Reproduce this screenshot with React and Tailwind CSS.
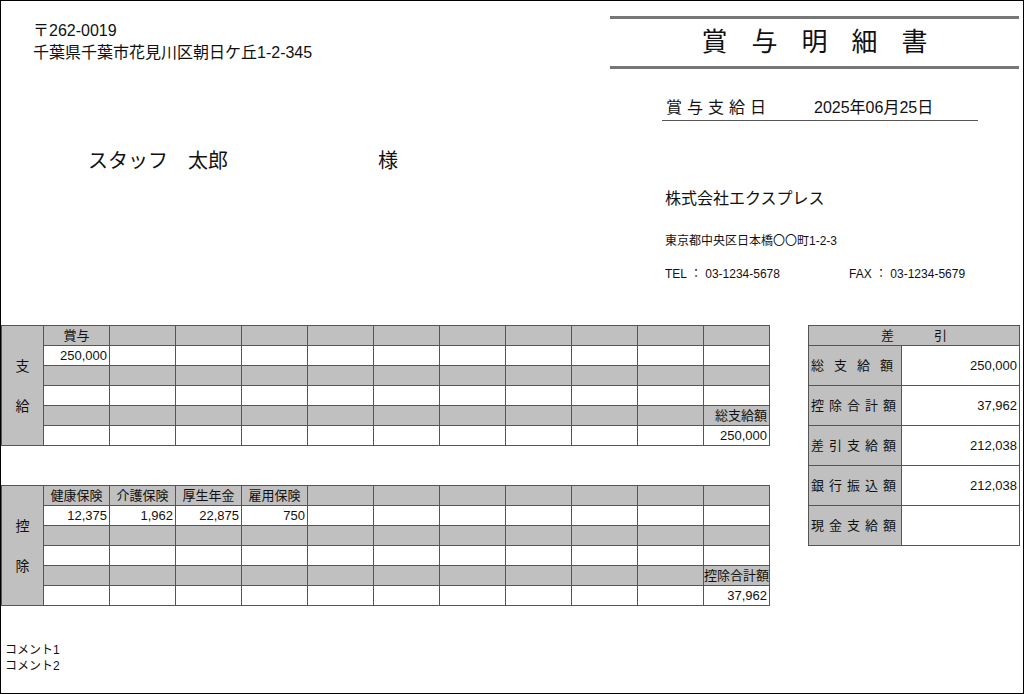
import React from "react";

const F = { fontFamily: '"Liberation Sans", "Noto Sans CJK JP", sans-serif' };

function Cell({ gray, children, className = "" }) {
  return (
    <td className={`border border-[#555] h-[20px] p-0 leading-[18px] text-[13px] whitespace-nowrap overflow-hidden ${gray ? "bg-[#c0c0c0]" : "bg-white"} ${className}`}>
      {children}
    </td>
  );
}

function DetailTable({ label, heads, values, totalLabel, total, smallTotal }) {
  return (
    <table className="border-collapse table-fixed w-[769px]">
      <colgroup>
        <col className="w-[42px]" />
        {Array.from({ length: 11 }).map((_, i) => <col key={i} className="w-[66px]" />)}
      </colgroup>
      <tbody>
        {[0, 1, 2, 3, 4, 5].map((r) => (
          <tr key={r}>
            {r === 0 && (
              <td rowSpan={6} className="border border-[#555] bg-[#c0c0c0] text-center text-[14px] leading-[40px]">
                {label[0]}<br />{label[1]}
              </td>
            )}
            {Array.from({ length: 11 }).map((_, c) => {
              const gray = r % 2 === 0;
              let content = null;
              let cls = "";
              if (r === 0 && heads[c]) { content = heads[c]; cls = "text-center"; }
              if (r === 1 && values[c]) { content = values[c]; cls = "text-right pr-[2px]"; }
              if (r === 4 && c === 10) { content = totalLabel; cls = smallTotal ? "text-right text-[10px] pr-[2px]" : "text-right pr-[2px]"; }
              if (r === 5 && c === 10) { content = total; cls = "text-right pr-[2px]"; }
              return <Cell key={c} gray={gray} className={cls}>{content}</Cell>;
            })}
          </tr>
        ))}
      </tbody>
    </table>
  );
}

export default function App() {
  const summary = [
    ["総支給額", "250,000", "tracking-[10px]"],
    ["控除合計額", "37,962", "tracking-[5px]"],
    ["差引支給額", "212,038", "tracking-[5px]"],
    ["銀行振込額", "212,038", "tracking-[5px]"],
    ["現金支給額", "", "tracking-[5px]"],
  ];
  return (
    <div style={F} className="w-[1024px] h-[694px] border border-black bg-white text-[#111] overflow-hidden">
      <div className="flex">
        <div className="w-[609px] pt-[19px] pl-[32px]">
          <div className="text-[16px] leading-[22px]">〒262-0019</div>
          <div className="text-[16px] leading-[22px]">千葉県千葉市花見川区朝日ケ丘1-2-345</div>
          <div className="flex text-[20px] mt-[82px] ml-[55px]">
            <span className="w-[290px]">スタッフ　太郎</span>
            <span>様</span>
          </div>
        </div>
        <div className="w-[409px] pt-[15px]">
          <div className="border-t-[3px] border-b-[3px] border-[#777] h-[53px] flex items-center justify-center text-[26px] tracking-[24px] pl-[24px]">
            賞与明細書
          </div>
          <div className="ml-[52px] mt-[27px] w-[316px] border-b border-[#555] flex text-[16px] leading-[24px] pl-[4px]">
            <span className="tracking-[5px] w-[148px]">賞与支給日</span>
            <span>2025年06月25日</span>
          </div>
          <div className="ml-[55px] mt-[66px] text-[16px]">株式会社エクスプレス</div>
          <div className="ml-[55px] mt-[21px] text-[12px]">東京都中央区日本橋〇〇町1-2-3</div>
          <div className="ml-[55px] mt-[15px] text-[12px] flex">
            <span className="w-[184px]">TEL ： 03-1234-5678</span>
            <span>FAX ： 03-1234-5679</span>
          </div>
        </div>
      </div>

      <div className="flex mt-[42px]">
        <div className="flex flex-col gap-[39px]">
          <DetailTable label="支給" heads={["賞与"]} values={["250,000"]} totalLabel="総支給額" total="250,000" />
          <DetailTable label="控除" heads={["健康保険", "介護保険", "厚生年金", "雇用保険"]} values={["12,375", "1,962", "22,875", "750"]} totalLabel="控除合計額" total="37,962" smallTotal />
        </div>
        <table className="border-collapse table-fixed w-[212px] ml-[38px] self-start">
          <colgroup><col className="w-[93px]" /><col /></colgroup>
          <tbody>
            <tr>
              <td colSpan={2} className="border border-[#555] bg-[#c0c0c0] text-center text-[13px] h-[20px] leading-[18px] tracking-[40px] pl-[40px]">差引</td>
            </tr>
            {summary.map(([k, v, t]) => (
              <tr key={k}>
                <td className={`border border-[#555] bg-[#c0c0c0] h-[40px] text-[13px] pl-[2px] whitespace-nowrap ${t}`}>{k}</td>
                <td className="border border-[#555] bg-white text-right text-[13px] pr-[2px]">{v}</td>
              </tr>
            ))}
          </tbody>
        </table>
      </div>

      <div className="mt-[36px] pl-[4px] text-[12px] leading-[16px]">
        <div>コメント1</div>
        <div>コメント2</div>
      </div>
    </div>
  );
}
